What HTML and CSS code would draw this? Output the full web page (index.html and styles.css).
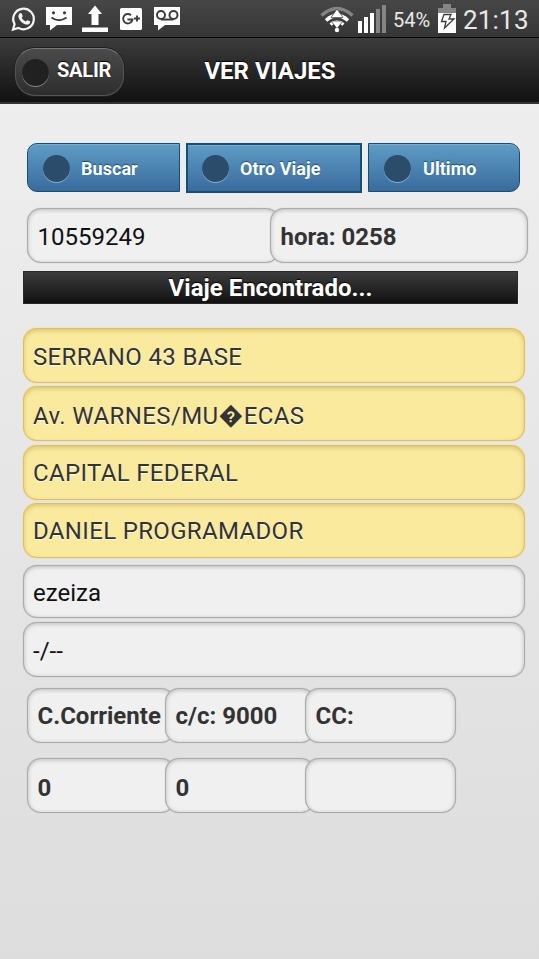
FILE: index.html
```
<!DOCTYPE html>
<html lang="es">
<head>
    <meta charset="UTF-8">
    <meta name="viewport" content="width=device-width, initial-scale=1.0">
    <title>Ver Viajes</title>
    <link rel="stylesheet" href="styles.css">
</head>
<body>
    <div class="statusbar">
        <svg class="notifications" width="200" height="38" viewBox="0 0 200 38">
            <!-- whatsapp -->
            <path d="M13 29.500l1.600-5.400a10.300 10.300 0 1 1 3.800 3.800z" fill="none" stroke="#f4f4f4" stroke-width="2.200"/>
            <path d="M19.500 13.500c1-1 2-.6 2.300.3l.9 2.100c.2.6-.7 1.400-1 1.900.9 1.800 2.300 3 4.100 3.800.6-.5 1.200-1.700 1.900-1.400l2.200 1.100c.6.4.2 2-.7 2.700-1.400 1-3.400.7-5.800-.6-2.400-1.400-4.600-4-5-6.400-.2-1.400.4-2.700 1.100-3.500z" fill="#f4f4f4"/>
            <!-- message -->
            <path d="M46 7h26v18H57l-7 5.500V25h-4z" fill="#fff"/>
            <circle cx="53.500" cy="12.800" r="1.600" fill="#3c3c3c"/>
            <circle cx="64.500" cy="12.800" r="1.600" fill="#3c3c3c"/>
            <path d="M51.500 17.500q7.500 5.500 15 0" fill="none" stroke="#3c3c3c" stroke-width="1.800"/>
            <!-- upload -->
            <path d="M95 5.500l7 8.500h-3.500v11h-7V14H88zM82 27.500h26V32H82z" fill="#fff"/>
            <!-- google plus -->
            <rect x="120" y="8" width="22" height="22" rx="1.500" fill="#fff"/>
            <path d="M131 15.200a4.700 4.700 0 1 0 1.500 4.300H127.500M134 18.500h6M137 15.500v6" fill="none" stroke="#3c3c3c" stroke-width="1.900"/>
            <!-- voicemail -->
            <path d="M154 7h26v18h-15l-7 5.500V25h-4z" fill="#fff"/>
            <g fill="none" stroke="#3c3c3c" stroke-width="2">
                <circle cx="161" cy="15" r="4"/>
                <circle cx="173.500" cy="15" r="4"/>
                <path d="M161 19.500h12.500"/>
            </g>
        </svg>
        <svg class="signals" width="70" height="38" viewBox="0 0 70 38">
            <!-- wifi -->
            <path d="M1.500 15.500Q17 1.500 32.500 15.500" fill="none" stroke="#858585" stroke-width="3.500"/>
            <path d="M6 20.500Q17 10.500 28 20.500" fill="none" stroke="#fff" stroke-width="3.600"/>
            <path d="M10.500 24.500Q17 19 23.500 24.500" fill="none" stroke="#fff" stroke-width="3"/>
            <path d="M17 9l6 8.500H11zM17 28.500l-6-7.500h12z" fill="#fff" stroke="#3a3a3a" stroke-width=".7"/>
            <circle cx="17" cy="30" r="2.200" fill="#fff"/>
            <!-- bars -->
            <path d="M38 21h4v12h-4zM44 17h4v16h-4zM50 13h4v20h-4z" fill="#fff"/>
            <path d="M56 9h4v24h-4zM62 5h4v28h-4z" fill="#858585"/>
        </svg>
        <span class="percent">54%</span>
        <svg class="battery" width="18" height="38" viewBox="0 0 18 38">
            <path d="M0 8h5V4h8v4h5v6H0z" fill="#858585"/>
            <path d="M0 13h18v20H0z" fill="#fff"/>
            <path d="M6 14.500h7l-2 4.500h5L6.500 28l1.500-6.500H3.500z" fill="#fff" stroke="#3a3a3a" stroke-width="1.300"/>
        </svg>
        <span class="clock">21:13</span>
    </div>

    <div class="header">
        <a class="btn-back"><span class="dot"></span>SALIR</a>
        <h1>VER VIAJES</h1>
    </div>

    <div class="content">
        <div class="buttons">
            <a class="btn btn-first"><span class="dot"></span><span>Buscar</span></a>
            <a class="btn btn-active"><span class="dot"></span><span>Otro Viaje</span></a>
            <a class="btn btn-last"><span class="dot"></span><span>Ultimo</span></a>
        </div>

        <div class="row row-search">
            <div class="field">10559249</div>
            <div class="field bold">hora: 0258</div>
        </div>

        <div class="bar">Viaje Encontrado...</div>

        <div class="trip">
            <div class="field yellow base">SERRANO 43 BASE</div>
            <div class="field yellow street">Av. WARNES/MU<span class="unknown">&#xFFFD;</span>ECAS</div>
            <div class="field yellow">CAPITAL FEDERAL</div>
            <div class="field yellow">DANIEL PROGRAMADOR</div>
        </div>
        <div class="destination">
            <div class="field short">ezeiza</div>
            <div class="field">-/--</div>
        </div>

        <div class="row row-account">
            <div class="field bold">C.Corriente</div>
            <div class="field bold">c/c: 9000</div>
            <div class="field bold">CC:</div>
        </div>
        <div class="row row-account row-totals">
            <div class="field bold">0</div>
            <div class="field bold">0</div>
            <div class="field bold"></div>
        </div>
    </div>
</body>
</html>
```
FILE: styles.css
```
* {
    box-sizing: border-box;
}
body {
    margin: 0;
    height: 959px;
    overflow: hidden;
    font-family: Roboto, "Liberation Sans", sans-serif;
    background: linear-gradient(#eeeeee 104px, #dddddd);
    color: #333;
}
.statusbar {
    display: flex;
    height: 38px;
    background: linear-gradient(#474747, #353535);
    border-bottom: 1px solid #080808;
    color: #e8e8e8;
}
.notifications {
    margin-right: 120px;
}
.statusbar svg {
    flex: none;
}
.percent {
    width: 47px;
    padding-left: 3px;
    font-size: 20px;
    line-height: 41px;
}
.battery {
    margin-left: 1px;
}
.clock {
    padding-left: 7px;
    font-size: 26px;
    line-height: 41px;
    letter-spacing: 0.2px;
}
.header {
    display: grid;
    grid-template-columns: 190px 160px 1fr;
    height: 66px;
    padding-top: 10px;
    background: linear-gradient(#3c3c3c, #111);
    border-bottom: 2px solid #333;
    color: #fff;
    text-shadow: 0 -1px 1px #000;
}
.header h1 {
    margin: 0;
    font-size: 24px;
    line-height: 47px;
    font-weight: bold;
    text-align: center;
    white-space: nowrap;
}
.btn-back {
    display: flex;
    align-items: center;
    width: 109px;
    height: 48px;
    margin-left: 15px;
    padding: 0 0 5px 6px;
    border: 1px solid #555;
    border-top-color: #777;
    border-radius: 20px;
    background: linear-gradient(#4b4b4b, #2d2d2d);
    box-shadow: 0 0 0 1px #202020;
    font-size: 20px;
    font-weight: bold;
    letter-spacing: -0.2px;
}
.dot {
    flex: none;
    width: 27px;
    height: 27px;
    border-radius: 50%;
    background: #2b4d6b;
    box-shadow: 0 1px 0 rgba(255, 255, 255, 0.4);
}
.btn-back .dot {
    margin: 5px 8px 0 0;
    background: #212121;
}
.content {
    padding: 39px 0 0 23px;
}
.buttons {
    display: flex;
    gap: 6px;
    height: 50px;
    margin-left: 4px;
}
.btn {
    display: flex;
    align-items: center;
    gap: 11px;
    width: 153px;
    height: 49px;
    padding: 2px 0 0 15px;
    border: 1px solid #145072;
    background: linear-gradient(#5f9cc5, #396b9e);
    box-shadow: inset 0 1px 0 #77acd0;
    color: #fff;
    font-size: 18px;
    font-weight: bold;
    letter-spacing: 0.05px;
    text-shadow: 0 -1px 1px #145072;
}
.btn-first {
    border-radius: 10px 0 0 10px;
}
.btn-active {
    width: 176px;
    height: 50px;
    padding: 0 0 0 14px;
    border-width: 2px;
}
.btn-last {
    width: 152px;
    gap: 12px;
    border-radius: 0 10px 10px 0;
}
.field {
    height: 55px;
    padding-left: 9px;
    border: 1px solid #aaa;
    border-radius: 14px;
    background: #f0f0f0;
    box-shadow: inset 0 1px 4px rgba(0, 0, 0, 0.22), 0 0 1px #aaa;
    color: #111;
    font-size: 24px;
    line-height: 56px;
    white-space: nowrap;
}
.bold {
    color: #333;
    font-weight: bold;
}
.row {
    display: grid;
    margin-left: 4px;
}
.row .field {
    padding-left: 9.500px;
}
.row .field + .field {
    margin-left: -10px;
}
.row-search {
    grid-template-columns: 253px 248px;
    margin-top: 15px;
}
.bar {
    width: 495px;
    height: 33px;
    margin-top: 8px;
    border: 1px solid #292929;
    background: linear-gradient(#3c3c3c, #111);
    color: #fff;
    font-size: 24px;
    font-weight: bold;
    line-height: 32px;
    text-align: center;
    text-shadow: 0 -1px 1px #000;
}
.trip {
    display: grid;
    width: 502px;
    margin-top: 24px;
    gap: 3.400px;
}
.yellow {
    border-color: #e9bd55;
    background: #faea9e;
    box-shadow: inset 0 2px 4px #d6c77c, 0 0 1px #e9bd55;
    color: #333;
    letter-spacing: 0.34px;
    line-height: 55px;
    text-shadow: 0 1px 0 #fff;
}
.base {
    line-height: 56px;
}
.street {
    line-height: 58px;
    letter-spacing: 0.4px;
}
.unknown {
    font-family: Roboto, "DejaVu Sans", sans-serif;
    text-shadow: none;
}
.destination {
    display: grid;
    width: 502px;
    margin-top: 7px;
    gap: 4px;
}
.short {
    height: 53px;
    line-height: 54px;
}
.row-account {
    grid-template-columns: 148px 140px 141px;
    margin-top: 11px;
}
.row-account .field {
    line-height: 54px;
}
.row-totals {
    margin-top: 15px;
}
.row-totals .field {
    line-height: 58px;
}
```
